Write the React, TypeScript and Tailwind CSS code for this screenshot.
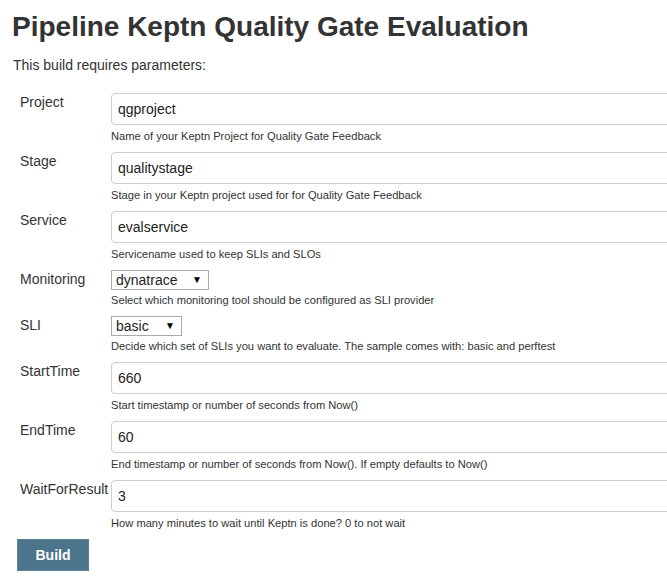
import React from "react";

type Row =
  | { kind: "input"; label: string; value: string; hint: string }
  | { kind: "select"; label: string; value: string; width: string; hint: string };

const rows: Row[] = [
  { kind: "input", label: "Project", value: "qgproject", hint: "Name of your Keptn Project for Quality Gate Feedback" },
  { kind: "input", label: "Stage", value: "qualitystage", hint: "Stage in your Keptn project used for for Quality Gate Feedback" },
  { kind: "input", label: "Service", value: "evalservice", hint: "Servicename used to keep SLIs and SLOs" },
  { kind: "select", label: "Monitoring", value: "dynatrace", width: "w-[98px]", hint: "Select which monitoring tool should be configured as SLI provider" },
  { kind: "select", label: "SLI", value: "basic", width: "w-[71px]", hint: "Decide which set of SLIs you want to evaluate. The sample comes with: basic and perftest" },
  { kind: "input", label: "StartTime", value: "660", hint: "Start timestamp or number of seconds from Now()" },
  { kind: "input", label: "EndTime", value: "60", hint: "End timestamp or number of seconds from Now(). If empty defaults to Now()" },
  { kind: "input", label: "WaitForResult", value: "3", hint: "How many minutes to wait until Keptn is done? 0 to not wait" },
];

export default function App() {
  return (
    <div className="w-[667px] h-[588px] overflow-hidden bg-white text-[#333] font-['Liberation_Sans',Arial,sans-serif]">
      <h1 className="pl-[12px] pt-[11px] text-[28px] leading-[32px] font-bold text-[#333] whitespace-nowrap">
        Pipeline Keptn Quality Gate Evaluation
      </h1>
      <p className="pl-[13px] mt-[12px] text-[14px] leading-[20px] text-[#333]">This build requires parameters:</p>
      <div className="mt-[18px] pl-[17px] flex flex-col">
        {rows.map((r) => (
          <div key={r.label} className="flex items-start mb-[8px]">
            <div className="w-[94px] shrink-0 pl-[3px] text-[14px] leading-[19px] text-[#333] whitespace-nowrap">
              {r.label}
            </div>
            <div className="flex flex-col">
              {r.kind === "input" ? (
                <div className="w-[600px] h-[32px] shrink-0 border border-[#ccc] rounded-[4px] flex items-center pl-[6px] text-[14px] text-[#222]">
                  {r.value}
                </div>
              ) : (
                <div
                  className={`${r.width} h-[20px] border border-[#a9a9a9] flex items-center justify-between pl-[4px] pr-[6px] text-[14px] text-[#222]`}
                >
                  <span>{r.value}</span>
                  <span className="text-[10px] leading-none text-black">▼</span>
                </div>
              )}
              <div
                className={`${r.kind === "input" ? "mt-[4px]" : "mt-[3px]"} text-[11.15px] leading-[15px] text-[#333] whitespace-nowrap`}
              >
                {r.hint}
              </div>
            </div>
          </div>
        ))}
        <div>
          <button className="w-[72px] h-[32px] bg-[#4b758b] border border-[#5a8296] text-white font-bold text-[14px]">
            Build
          </button>
        </div>
      </div>
    </div>
  );
}
